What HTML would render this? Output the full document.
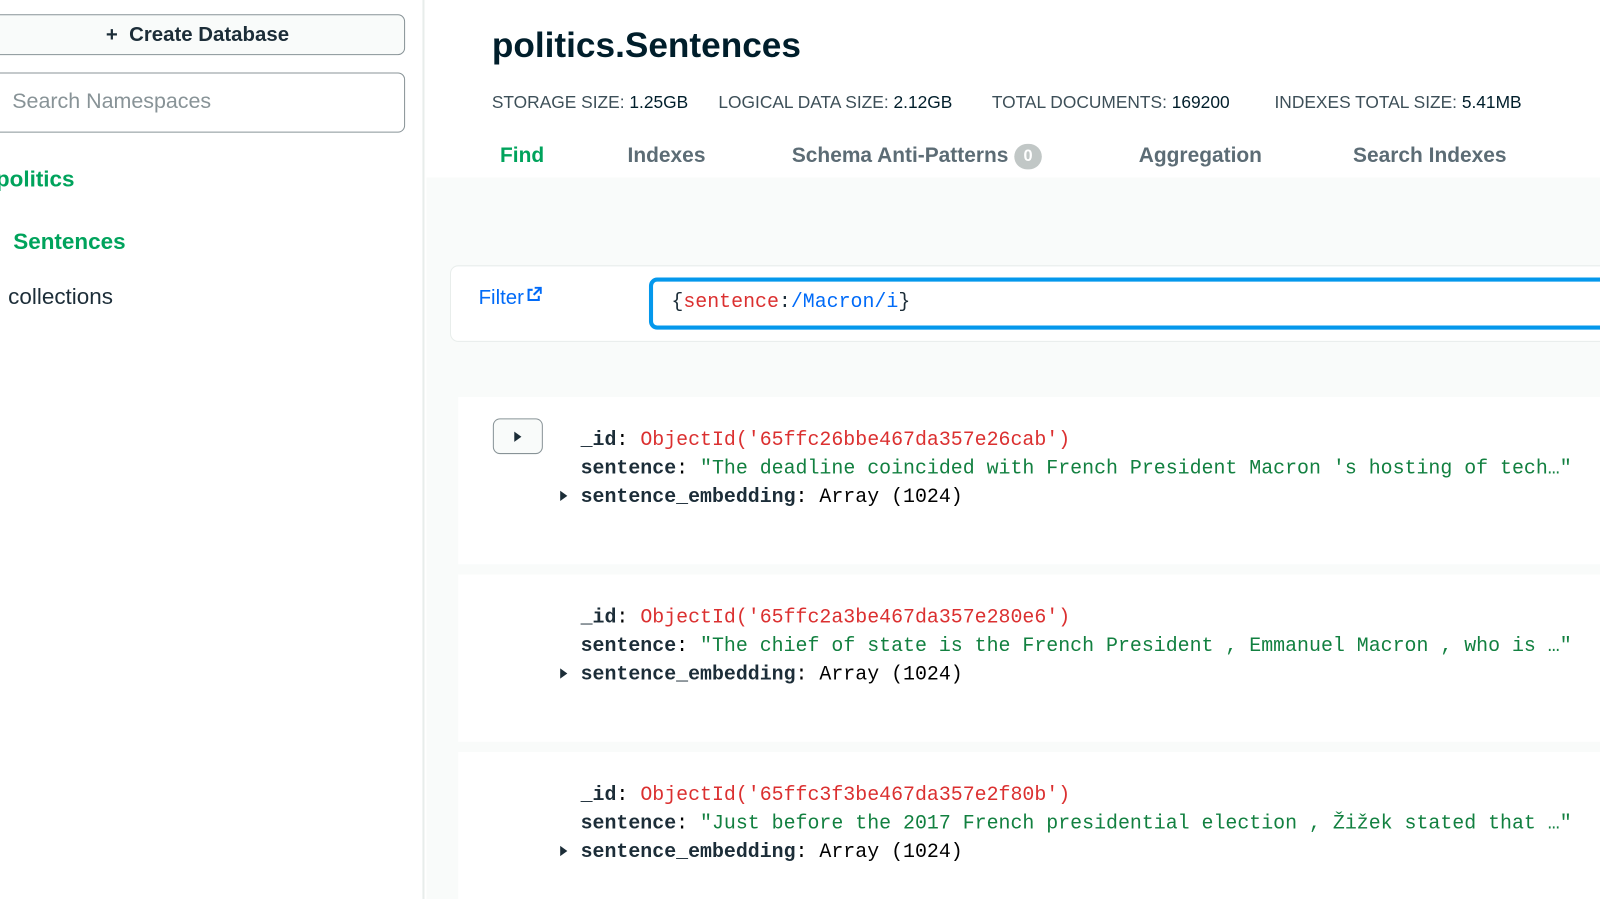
<!DOCTYPE html>
<html><head><meta charset="utf-8"><style>
*{margin:0;padding:0;box-sizing:border-box}
html,body{width:1600px;height:881px;overflow:hidden;background:#fff}
#w{position:absolute;left:0;top:0;width:1568px;height:864px;transform:scale(1.0204);transform-origin:0 0;font-family:"Liberation Sans",sans-serif}
.a{position:absolute;white-space:nowrap}
.side{left:0;top:0;width:416px;height:881px;background:#fff;border-right:2px solid #e8edeb}
.btn{left:-10px;top:14px;width:407px;height:40px;border:1.5px solid #889397;border-radius:7px;background:#f9fbfa;font-size:20px;font-weight:bold;color:#1c2d38;text-align:center;line-height:38px}
.search{left:-10px;top:71px;width:407px;height:59px;border:1.5px solid #889397;border-radius:7px;font-size:21px;color:#889397;padding-left:21px;line-height:56px}
.main{left:418px;top:174px;width:1183px;height:707px;background:#f9fbfa}
.tab{top:141px;font-size:20.5px;font-weight:bold;color:#5c6c75}
.stat{top:91px;font-size:17px;color:#3d4f58}
.mono{font-family:"Liberation Mono",monospace;font-size:19.5px}
.card{left:449px;width:1151px;height:164px;background:#fff}
.k{color:#1c2d38;font-weight:bold}
.r{color:#db3030}
.g{color:#128040}
.tri{display:inline-block;width:0;height:0;border-left:7px solid #1c2d38;border-top:5px solid transparent;border-bottom:5px solid transparent}
</style></head><body><div id="w">
<div class="a side"></div>
<div class="a btn">+&nbsp; Create Database</div>
<div class="a search">Search Namespaces</div>
<div class="a" style="left:-4px;top:163px;font-size:22px;font-weight:bold;color:#00a35c">politics</div>
<div class="a" style="left:13px;top:224px;font-size:22px;font-weight:bold;color:#00a35c">Sentences</div>
<div class="a" style="left:8px;top:278px;font-size:22px;color:#1c2d38">collections</div>

<div class="a main"></div>
<div class="a" style="left:482px;top:26px;font-size:34.5px;font-weight:bold;color:#001e2b">politics.Sentences</div>
<div class="a stat" style="left:482px">STORAGE SIZE: <span style="color:#001e2b">1.25GB</span></div>
<div class="a stat" style="left:704px">LOGICAL DATA SIZE: <span style="color:#001e2b">2.12GB</span></div>
<div class="a stat" style="left:972px">TOTAL DOCUMENTS: <span style="color:#001e2b">169200</span></div>
<div class="a stat" style="left:1249px">INDEXES TOTAL SIZE: <span style="color:#001e2b">5.41MB</span></div>
<div class="a tab" style="left:490px;color:#00a35c">Find</div>
<div class="a tab" style="left:615px">Indexes</div>
<div class="a tab" style="left:776px">Schema Anti-Patterns <span style="display:inline-block;width:27px;height:25px;border-radius:13px;background:#c1c7c6;color:#fff;font-size:16px;text-align:center;line-height:25px;vertical-align:middle">0</span></div>
<div class="a tab" style="left:1116px">Aggregation</div>
<div class="a tab" style="left:1326px">Search Indexes</div>

<div class="a" style="left:441px;top:260px;width:1170px;height:75px;background:#fff;border:1.5px solid #e8edeb;border-radius:8px"></div>
<div class="a" style="left:469px;top:281px;font-size:20px;color:#016bf8">Filter<svg width="15" height="15" viewBox="0 0 15 15" style="vertical-align:top;margin-left:3px"><path d="M6 3H2v10h10V9" fill="none" stroke="#016bf8" stroke-width="2"/><path d="M8 1h6v6M14 1L7 8" fill="none" stroke="#016bf8" stroke-width="2"/></svg></div>
<div class="a" style="left:636px;top:272px;width:980px;height:51px;border:4px solid #0498ec;border-radius:8px;background:#fff"></div>
<div class="a mono" style="left:658px;top:285px;color:#1c2d38">{<span class="r">sentence</span>:<span style="color:#016bf8">/Macron/i</span>}</div>

<div class="a card" style="top:389px"></div>
<div class="a" style="left:483px;top:410px;width:49px;height:35px;border:1.5px solid #889397;border-radius:7px;background:#f9fbfa"><span class="tri" style="position:absolute;left:20px;top:12px"></span></div>
<div class="a mono" style="left:569px;top:417px;line-height:28px"><span class="k">_id</span>: <span class="r">ObjectId('65ffc26bbe467da357e26cab')</span><br><span class="k">sentence</span>: <span class="g">"The deadline coincided with French President Macron 's hosting of tech…"</span><br><span class="k">sentence_embedding</span>: Array (1024)</div>
<span class="a tri" style="left:549px;top:481px"></span>

<div class="a card" style="top:563px"></div>
<div class="a mono" style="left:569px;top:591px;line-height:28px"><span class="k">_id</span>: <span class="r">ObjectId('65ffc2a3be467da357e280e6')</span><br><span class="k">sentence</span>: <span class="g">"The chief of state is the French President , Emmanuel Macron , who is …"</span><br><span class="k">sentence_embedding</span>: Array (1024)</div>
<span class="a tri" style="left:549px;top:655px"></span>

<div class="a card" style="top:737px"></div>
<div class="a mono" style="left:569px;top:765px;line-height:28px"><span class="k">_id</span>: <span class="r">ObjectId('65ffc3f3be467da357e2f80b')</span><br><span class="k">sentence</span>: <span class="g">"Just before the 2017 French presidential election , Žižek stated that …"</span><br><span class="k">sentence_embedding</span>: Array (1024)</div>
<span class="a tri" style="left:549px;top:829px"></span>
</div></body></html>
